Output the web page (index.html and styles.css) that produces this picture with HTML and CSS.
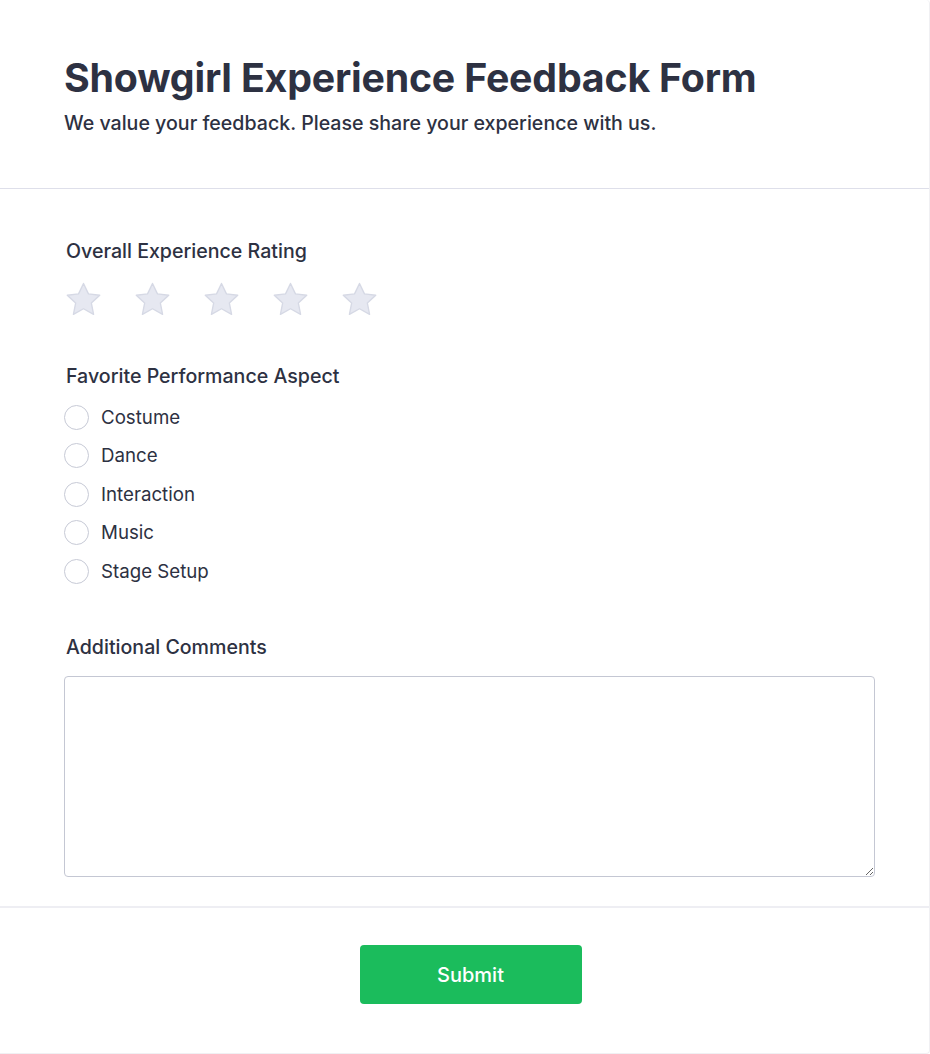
FILE: index.html
```html
<!DOCTYPE html>
<html>
<head>
<meta charset="utf-8">
<link rel="stylesheet" href="styles.css">
</head>
<body>
<div class="card">
  <header class="head">
    <h1 class="title">Showgirl Experience Feedback Form</h1>
    <p class="sub">We value your feedback. Please share your experience with us.</p>
  </header>
  <form class="body">
    <div class="field">
      <div class="label">Overall Experience Rating</div>
      <div class="stars">
        <svg class="star" viewBox="0 0 24 24"><path d="M12 2.6l2.9 6.1 6.6.8-4.9 4.6 1.3 6.6L12 17.4l-5.9 3.3 1.3-6.6-4.9-4.6 6.6-.8z"/></svg>
        <svg class="star" viewBox="0 0 24 24"><path d="M12 2.6l2.9 6.1 6.6.8-4.9 4.6 1.3 6.6L12 17.4l-5.9 3.3 1.3-6.6-4.9-4.6 6.6-.8z"/></svg>
        <svg class="star" viewBox="0 0 24 24"><path d="M12 2.6l2.9 6.1 6.6.8-4.9 4.6 1.3 6.6L12 17.4l-5.9 3.3 1.3-6.6-4.9-4.6 6.6-.8z"/></svg>
        <svg class="star" viewBox="0 0 24 24"><path d="M12 2.6l2.9 6.1 6.6.8-4.9 4.6 1.3 6.6L12 17.4l-5.9 3.3 1.3-6.6-4.9-4.6 6.6-.8z"/></svg>
        <svg class="star" viewBox="0 0 24 24"><path d="M12 2.6l2.9 6.1 6.6.8-4.9 4.6 1.3 6.6L12 17.4l-5.9 3.3 1.3-6.6-4.9-4.6 6.6-.8z"/></svg>
      </div>
    </div>
    <div class="field aspect">
      <div class="label">Favorite Performance Aspect</div>
      <div class="options">
        <label class="opt"><span class="radio"></span>Costume</label>
        <label class="opt"><span class="radio"></span>Dance</label>
        <label class="opt"><span class="radio"></span>Interaction</label>
        <label class="opt"><span class="radio"></span>Music</label>
        <label class="opt"><span class="radio"></span>Stage Setup</label>
      </div>
    </div>
    <div class="field comments">
      <div class="label">Additional Comments</div>
      <textarea class="ta"></textarea>
    </div>
  </form>
  <footer class="foot">
    <button class="submit" type="button">Submit</button>
  </footer>
</div>
</body>
</html>
```
FILE: styles.css
```css
* { box-sizing: border-box; }
html, body { margin: 0; padding: 0; background: #fff; }
body {
  font-family: Inter, "Noto Sans", sans-serif;
  color: #2d3142;
}
.card {
  width: 930px;
  height: 1054px;
  border-right: 1px solid #f0f0f3;
  border-bottom: 1px solid #f0f0f3;
  border-radius: 0 4px 4px 0;
  background: #fff;
}
.head {
  padding: 53px 64px 0;
  height: 189px;
  border-bottom: 1px solid #dedfea;
}
.title {
  margin: 0;
  font-size: 39.3px;
  font-weight: 700;
  line-height: 50px;
  color: #2d3142;
  letter-spacing: -0.2px;
}
.sub {
  margin: 7px 0 0;
  font-size: 19.6px;
  line-height: 26px;
  font-weight: 500;
  color: #2d3142;
}
.body {
  padding: 0 54px 30px 64px;
  height: 719px;
  border-bottom: 2px solid #eeeef3;
}
.field { padding-top: 49px; }
.field.aspect { padding-top: 43px; }
.field.comments { padding-top: 43px; }
.label {
  margin-left: 2px;
  font-size: 19.6px;
  font-weight: 500;
  line-height: 26px;
  color: #2d3142;
}
.stars {
  display: flex;
  gap: 28px;
  margin-top: 15px;
  margin-left: -1px;
}
.star {
  width: 41px;
  height: 41px;
  fill: #e6e8f1;
  stroke: #d6d9e5;
  stroke-width: 0.8;
  stroke-linejoin: round;
}
.options { margin-top: 9px; display: flex; flex-direction: column; }
.opt {
  display: flex;
  align-items: center;
  height: 38.5px;
  font-size: 18.7px;
  color: #2d3142;
}
.radio {
  width: 25px;
  height: 25px;
  border: 1.5px solid #c7cad6;
  border-radius: 50%;
  margin-right: 12px;
  background: #fff;
}
.ta {
  display: block;
  margin-top: 16px;
  width: 811px;
  height: 201px;
  border: 1px solid #c4c7d3;
  border-radius: 4px;
  resize: vertical;
  background: #fff;
}
.foot {
  display: flex;
  justify-content: center;
  padding: 37px 0 0 12px;
}
.submit {
  width: 222px;
  height: 59px;
  background: #1bbc5c;
  color: #fff;
  border: none;
  border-radius: 4px;
  font-family: Inter, sans-serif;
  font-size: 20px;
  font-weight: 500;
}
```
